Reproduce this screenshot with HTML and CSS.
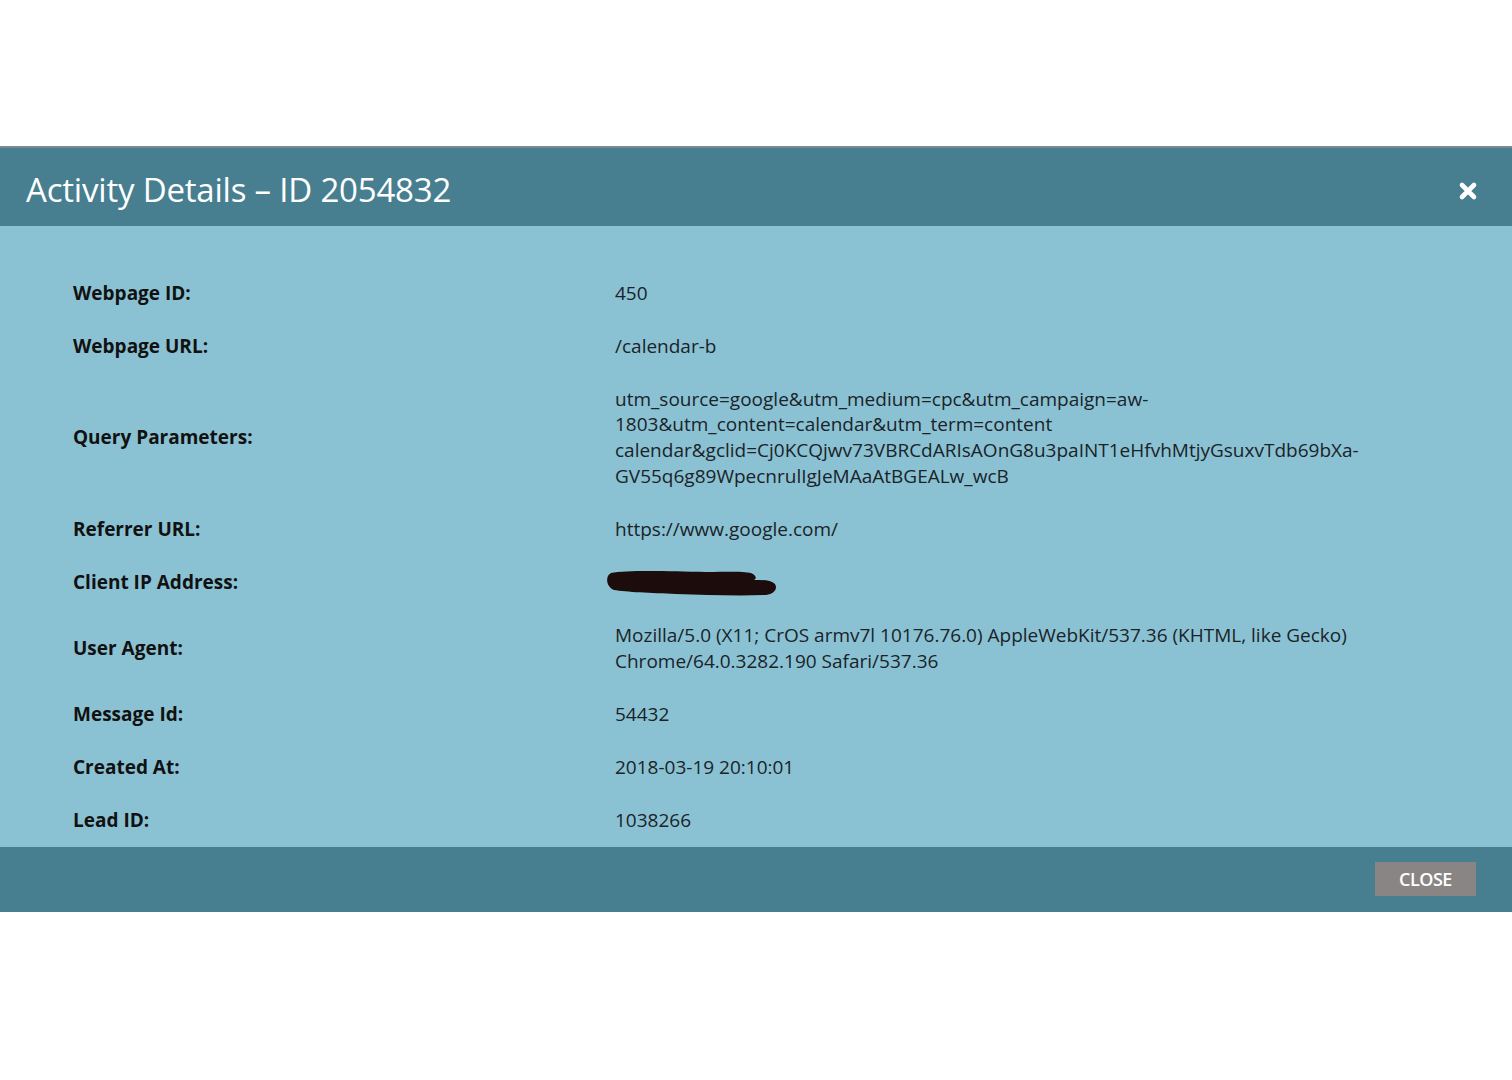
FILE: index.html
```html
<!DOCTYPE html>
<html lang="en">
<head>
    <meta charset="UTF-8">
    <title>Activity Details</title>
    <link rel="stylesheet" href="styles.css">
</head>
<body>

    <div class="modal">
        <header class="modal-header">
            <h1>Activity Details &ndash; ID 2054832</h1>
            <button class="close-x" aria-label="Close">
                <svg width="20" height="20" viewBox="0 0 20 20">
                    <path d="M4 4 L16 16 M16 4 L4 16" stroke="#fff" stroke-width="4.6" stroke-linecap="round"/>
                </svg>
            </button>
        </header>

        <div class="modal-body">
            <div class="row">
                <div class="label">Webpage ID:</div>
                <div class="value">450</div>
            </div>
            <div class="row">
                <div class="label">Webpage URL:</div>
                <div class="value">/calendar-b</div>
            </div>
            <div class="row">
                <div class="label">Query Parameters:</div>
                <div class="value">utm_source=google&amp;utm_medium=cpc&amp;utm_campaign=aw-<br>1803&amp;utm_content=calendar&amp;utm_term=content<br>calendar&amp;gclid=Cj0KCQjwv73VBRCdARIsAOnG8u3paINT1eHfvhMtjyGsuxvTdb69bXa-<br>GV55q6g89WpecnrulIgJeMAaAtBGEALw_wcB</div>
            </div>
            <div class="row">
                <div class="label">Referrer URL:</div>
                <div class="value">https://www.google.com/</div>
            </div>
            <div class="row">
                <div class="label">Client IP Address:</div>
                <div class="value">
                    <svg class="redacted" width="172" height="26" viewBox="0 0 172 26">
                        <path d="M5 3 C20 0 60 1 100 2 C125 2 141 1 147 4 C151 7 150 9 148 10 C157 10 165 10 169 14 C172 19 168 24 160 25 C130 26 100 25 70 24 C45 23 20 22 8 20 C0 17 -1 6 5 3 Z" fill="#1c0c0c"/>
                    </svg>
                </div>
            </div>
            <div class="row">
                <div class="label">User Agent:</div>
                <div class="value">Mozilla/5.0 (X11; CrOS armv7l 10176.76.0) AppleWebKit/537.36 (KHTML, like Gecko)<br>Chrome/64.0.3282.190 Safari/537.36</div>
            </div>
            <div class="row">
                <div class="label">Message Id:</div>
                <div class="value">54432</div>
            </div>
            <div class="row">
                <div class="label">Created At:</div>
                <div class="value">2018-03-19 20:10:01</div>
            </div>
            <div class="row">
                <div class="label">Lead ID:</div>
                <div class="value">1038266</div>
            </div>
        </div>

        <footer class="modal-footer">
            <button class="close-btn">CLOSE</button>
        </footer>
    </div>

</body>
</html>
```

FILE: styles.css
```css
body {
    margin: 0;
    padding: 146px 0 0;
    background: #fff;
    font-family: 'Open Sans', sans-serif;
}

.modal {
    width: 100%;
}

.modal-header {
    height: 74px;
    border-top: 2px solid #7f8a8e;
    background-color: #477f91;
    display: flex;
    align-items: center;
    justify-content: space-between;
    padding: 4px 34px 0 26px;
    box-sizing: content-box;
}

.modal-header h1 {
    margin: 0;
    color: #fff;
    font-size: 33px;
    font-weight: 400;
    letter-spacing: -0.2px;
}

.close-x {
    background: none;
    border: none;
    padding: 0;
    margin-top: 4px;
    width: 20px;
    height: 20px;
    cursor: pointer;
}

.modal-body {
    background-color: #8ac2d3;
    padding: 41px 0 0 73px;
}

.row {
    display: flex;
    align-items: center;
    padding: 13.65px 0;
}

.label {
    width: 542px;
    font-size: 19px;
    font-weight: 700;
    color: #111;
    line-height: 25.7px;
}

.value {
    font-size: 19px;
    color: #1b2329;
    line-height: 25.7px;
}

.redacted {
    display: block;
    margin-left: -9px;
}

.modal-footer {
    height: 65px;
    background-color: #477f91;
    display: flex;
    align-items: center;
    justify-content: flex-end;
    padding-right: 36px;
}

.close-btn {
    width: 101px;
    height: 34px;
    background-color: #8a8585;
    color: #fff;
    border: none;
    font-family: 'Open Sans', sans-serif;
    font-size: 18px;
    font-weight: 600;
    letter-spacing: -0.5px;
    cursor: pointer;
}
```
